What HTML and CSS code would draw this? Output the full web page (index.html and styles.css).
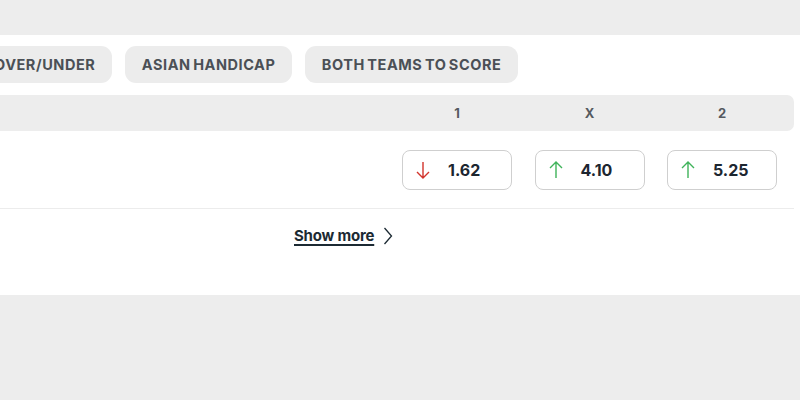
FILE: index.html
```html
<!DOCTYPE html>
<html>
<head>
<meta charset="utf-8">
<link rel="stylesheet" href="styles.css">
</head>
<body>
<div class="top"></div>
<div class="card">
  <div class="tabs">
    <div class="tab">OVER/UNDER</div>
    <div class="tab">ASIAN HANDICAP</div>
    <div class="tab">BOTH TEAMS TO SCORE</div>
  </div>
  <div class="head">
    <div class="spacer"></div>
    <div class="col">1</div>
    <div class="col">X</div>
    <div class="col">2</div>
  </div>
  <div class="row">
    <div class="spacer"></div>
    <div class="odd">
      <svg class="arr down" width="16" height="18" viewBox="0 0 16 18"><path d="M8 1v16M2 11l6 6 6-6" fill="none" stroke="currentColor" stroke-width="1.4"/></svg>
      <span>1.62</span>
    </div>
    <div class="odd">
      <svg class="arr up" width="16" height="18" viewBox="0 0 16 18"><path d="M8 17V1M2 7l6-6 6 6" fill="none" stroke="currentColor" stroke-width="1.4"/></svg>
      <span>4.10</span>
    </div>
    <div class="odd">
      <svg class="arr up" width="16" height="18" viewBox="0 0 16 18"><path d="M8 17V1M2 7l6-6 6 6" fill="none" stroke="currentColor" stroke-width="1.4"/></svg>
      <span>5.25</span>
    </div>
  </div>
  <div class="more">
    <a class="more-link">Show more</a>
    <svg width="10" height="18" viewBox="0 0 10 18"><path d="M1.5 1l7 8-7 8" fill="none" stroke="#1c2a33" stroke-width="1.3"/></svg>
  </div>
</div>
</body>
</html>
```
FILE: styles.css
```css
* { box-sizing: border-box; }
html, body { margin: 0; padding: 0; }
body {
  background: #ededed;
  font-family: Inter, "Liberation Sans", sans-serif;
  width: 800px;
  height: 400px;
  overflow: hidden;
}
.top { height: 35px; }
.card {
  background: #fff;
  height: 260px;
  padding-right: 6px;
}
.tabs {
  display: flex;
  gap: 12.5px;
  padding-top: 11px;
  margin-left: -23px;
  height: 60px;
}
.tab {
  height: 37px;
  padding: 0 17px;
  background: #ececec;
  border-radius: 11px;
  display: flex;
  align-items: center;
  font-size: 14.5px;
  font-weight: 700;
  color: #4b5056;
  letter-spacing: 0.55px;
  word-spacing: -1.5px;
  white-space: nowrap;
}
.head {
  display: flex;
  gap: 22.5px;
  height: 36px;
  background: #ededed;
  border-radius: 0 7px 7px 0;
  padding-right: 17px;
  align-items: center;
}
.spacer { flex: 1; }
.col {
  width: 110px;
  text-align: center;
  font-size: 13px;
  font-weight: 700;
  color: #555a60;
}
.row {
  display: flex;
  gap: 22.5px;
  padding: 19px 17px 18px 0;
  border-bottom: 1px solid #ececec;
}
.odd {
  width: 110px;
  height: 40px;
  border: 1px solid #cfcfcf;
  border-radius: 8px;
  display: flex;
  align-items: center;
  padding-left: 12px;
  gap: 17px;
  font-size: 16px;
  font-weight: 700;
  color: #1c2630;
}
.arr { display: block; }
.down { color: #d2342c; }
.up { color: #3fb35a; }
.more {
  display: flex;
  align-items: center;
  gap: 9px;
  padding-left: 294px;
  padding-top: 17px;
}
.more-link {
  font-size: 15px;
  font-weight: 700;
  color: #1c2a33;
  text-decoration: underline;
  text-underline-offset: 3px;
  text-decoration-thickness: 1.5px;
  letter-spacing: -0.2px;
}
```
